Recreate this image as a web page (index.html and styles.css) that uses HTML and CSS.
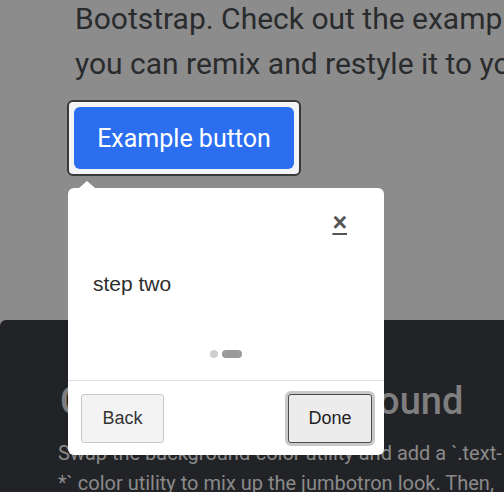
FILE: index.html
```html
<!DOCTYPE html>
<html lang="en">
<head>
<meta charset="utf-8">
<title>Tour step two</title>
<link rel="stylesheet" href="styles.css">
</head>
<body>
<main class="page">
  <p class="lead"><span class="line">Bootstrap. Check out the examples repo where</span><span class="line">you can remix and restyle it to your liking.</span></p>
  <div class="highlight"><button class="btn-primary" type="button">Example button</button></div>
  <section class="jumbo">
    <h2 class="jumbo-title">Change the background</h2>
    <p class="jumbo-text"><span class="line">Swap the background-color utility and add a `.text-</span><span class="line">*` color utility to mix up the jumbotron look. Then,</span></p>
  </section>
</main>
<div class="popover" role="dialog">
  <span class="popover-arrow"></span>
  <div class="popover-head"><button class="popover-close" type="button">×</button></div>
  <div class="popover-body">step two</div>
  <div class="popover-dots"><span class="dot"></span><span class="dot dot-active"></span></div>
  <div class="popover-footer">
    <button class="pbtn" type="button">Back</button>
    <button class="pbtn pbtn-focus" type="button">Done</button>
  </div>
</div>
</body>
</html>
```
FILE: styles.css
```css
html, body {
  margin: 0;
  padding: 0;
}
body {
  width: 504px;
  height: 492px;
  overflow: hidden;
  background: #8c8c8c;
  position: relative;
  font-family: Roboto, "Liberation Sans", sans-serif;
}
.page {
  display: flex;
  flex-direction: column;
}
.line {
  display: block;
  white-space: nowrap;
}
.lead {
  margin: -4px 0 0 0;
  padding-left: 75px;
  font-size: 30px;
  line-height: 45px;
  color: #2a2b2c;
}
.highlight {
  margin: 14px 0 0 67px;
  width: 234px;
  height: 76px;
  box-sizing: border-box;
  border: 2px solid #393939;
  border-radius: 6px;
  background: #f3f4f6;
  padding: 5px;
}
.btn-primary {
  display: block;
  width: 220px;
  height: 62px;
  border: 0;
  border-radius: 6px;
  background: #2b6ff0;
  color: #fff;
  font-family: Roboto, "Liberation Sans", sans-serif;
  font-size: 25px;
  padding: 0;
}
.jumbo {
  margin-top: 144px;
  background: #222327;
  border-top-left-radius: 6px;
  padding: 59px 0 0 58px;
  height: 200px;
}
.jumbo-title {
  margin: 0 0 13px 2px;
  font-size: 38px;
  line-height: 1.2;
  font-weight: 500;
  color: #7f7f7f;
}
.jumbo-text {
  margin: 0;
  font-size: 20px;
  line-height: 30px;
  color: #8a8a8a;
}
.popover {
  position: absolute;
  left: 68px;
  top: 188px;
  width: 316px;
  height: 267px;
  background: #fff;
  border-radius: 6px;
  font-family: "Liberation Sans", Arial, sans-serif;
  color: #2d2d2d;
  display: flex;
  flex-direction: column;
}
.popover-arrow {
  position: absolute;
  left: 11px;
  top: -7px;
  width: 0;
  height: 0;
  border-left: 8px solid transparent;
  border-right: 8px solid transparent;
  border-bottom: 7px solid #fff;
}
.popover-head {
  display: flex;
  justify-content: flex-end;
  padding: 22px 37px 0 0;
  height: 24px;
}
.popover-close {
  border: 0;
  background: transparent;
  padding: 0;
  font-family: "Liberation Sans", Arial, sans-serif;
  font-size: 25px;
  font-weight: 700;
  line-height: 20px;
  color: #555;
  text-decoration: underline;
  text-decoration-thickness: 2px;
  text-underline-offset: 2px;
}
.popover-body {
  padding: 38px 0 0 25px;
  font-size: 21px;
  line-height: 24px;
}
.popover-dots {
  display: flex;
  justify-content: center;
  align-items: center;
  gap: 4px;
  margin-top: 54px;
}
.dot {
  width: 8px;
  height: 8px;
  border-radius: 4px;
  background: #cfcfcf;
}
.dot-active {
  width: 20px;
  background: #9a9a9a;
}
.popover-footer {
  margin-top: 22px;
  border-top: 1px solid #e0e0e0;
  display: flex;
  justify-content: space-between;
  padding: 13px 12px 0 13px;
}
.pbtn {
  width: 83px;
  height: 49px;
  box-sizing: border-box;
  border: 1px solid #c9c9c9;
  border-radius: 3px;
  background: #f3f3f3;
  font-family: "Liberation Sans", Arial, sans-serif;
  font-size: 18px;
  color: #333;
  padding: 0;
}
.pbtn-focus {
  width: 84px;
  border-color: #4a4a4a;
  background: #ececec;
  color: #222;
  box-shadow: 0 0 0 3px #c9c9c9;
}
```
